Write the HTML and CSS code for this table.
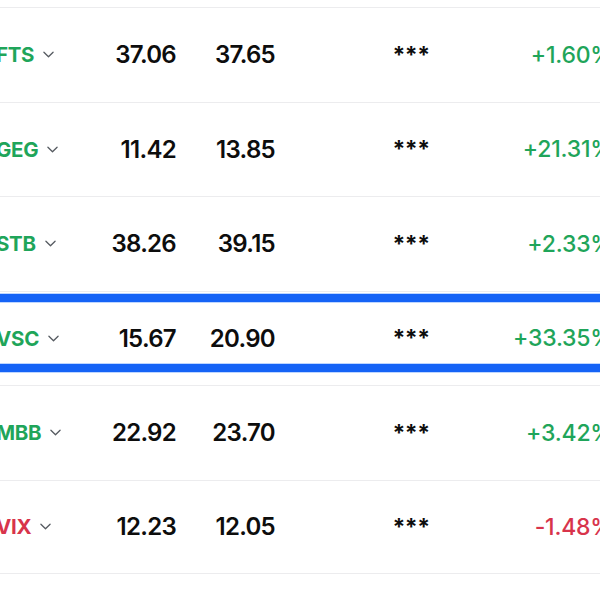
FILE: index.html
```html
<!DOCTYPE html>
<html>
<head>
<meta charset="utf-8">
<link rel="stylesheet" href="styles.css">
</head>
<body>
<div class="list">
  <div class="row">
    <div class="sym up">FTS<svg class="chev" viewBox="0 0 12 7"><path d="M1 1l5 5 5-5"/></svg></div>
    <div class="num">37.06</div>
    <div class="num">37.65</div>
    <div class="stars">***</div>
    <div class="pct up"><span>+1.60%</span></div>
  </div>
  <div class="row">
    <div class="sym up">GEG<svg class="chev" viewBox="0 0 12 7"><path d="M1 1l5 5 5-5"/></svg></div>
    <div class="num">11.42</div>
    <div class="num">13.85</div>
    <div class="stars">***</div>
    <div class="pct up"><span>+21.31%</span></div>
  </div>
  <div class="row">
    <div class="sym up">STB<svg class="chev" viewBox="0 0 12 7"><path d="M1 1l5 5 5-5"/></svg></div>
    <div class="num">38.26</div>
    <div class="num">39.15</div>
    <div class="stars">***</div>
    <div class="pct up"><span>+2.33%</span></div>
  </div>
  <div class="row focus">
    <div class="sym up">VSC<svg class="chev" viewBox="0 0 12 7"><path d="M1 1l5 5 5-5"/></svg></div>
    <div class="num">15.67</div>
    <div class="num">20.90</div>
    <div class="stars">***</div>
    <div class="pct up"><span>+33.35%</span></div>
    <div class="ring"></div>
  </div>
  <div class="row">
    <div class="sym up">MBB<svg class="chev" viewBox="0 0 12 7"><path d="M1 1l5 5 5-5"/></svg></div>
    <div class="num">22.92</div>
    <div class="num">23.70</div>
    <div class="stars">***</div>
    <div class="pct up"><span>+3.42%</span></div>
  </div>
  <div class="row last">
    <div class="sym down">VIX<svg class="chev" viewBox="0 0 12 7"><path d="M1 1l5 5 5-5"/></svg></div>
    <div class="num">12.23</div>
    <div class="num">12.05</div>
    <div class="stars">***</div>
    <div class="pct down"><span>-1.48%</span></div>
  </div>
</div>
</body>
</html>
```
FILE: styles.css
```css
html, body {
  margin: 0;
  padding: 0;
  background: #ffffff;
  overflow: hidden;
}
body {
  width: 600px;
  height: 600px;
  font-family: Inter, "Noto Sans", sans-serif;
  color: #111111;
}
.list {
  margin-left: -4px;
  width: 617px;
  padding-top: 7px;
}
.row {
  position: relative;
  box-sizing: border-box;
  height: 94.5px;
  border-top: 1px solid #ececee;
  display: grid;
  grid-template-columns: 104px 76px 99px 272px 66px;
  align-items: center;
}
.row.last {
  border-bottom: 1px solid #ececee;
}
.sym {
  display: flex;
  align-items: center;
  gap: 9px;
  font-size: 20.5px;
  font-weight: 700;
  letter-spacing: -0.3px;
}
.up { color: #1fa55a; }
.down { color: #d8344b; }
.chev {
  width: 11px;
  height: 7px;
  fill: none;
  stroke: #555a60;
  stroke-width: 1.4;
  stroke-linecap: round;
  stroke-linejoin: round;
}
.num {
  text-align: right;
  font-size: 24px;
  font-weight: 600;
  letter-spacing: -0.7px;
  color: #0d0d0d;
}
.stars {
  text-align: center;
  font-size: 23px;
  font-weight: 700;
  letter-spacing: -0.5px;
  color: #0d0d0d;
}
.pct {
  display: flex;
  justify-content: flex-end;
  white-space: nowrap;
  font-size: 23px;
  font-weight: 500;
  letter-spacing: -0.2px;
}
.ring {
  position: absolute;
  left: -20px;
  right: -20px;
  top: 2px;
  height: 78px;
  box-sizing: border-box;
  border: 8.5px solid #1563f6;
  box-shadow: 0 0 0 1px rgba(110, 165, 255, 0.45), inset 0 0 0 1px rgba(110, 165, 255, 0.45);
}
```
